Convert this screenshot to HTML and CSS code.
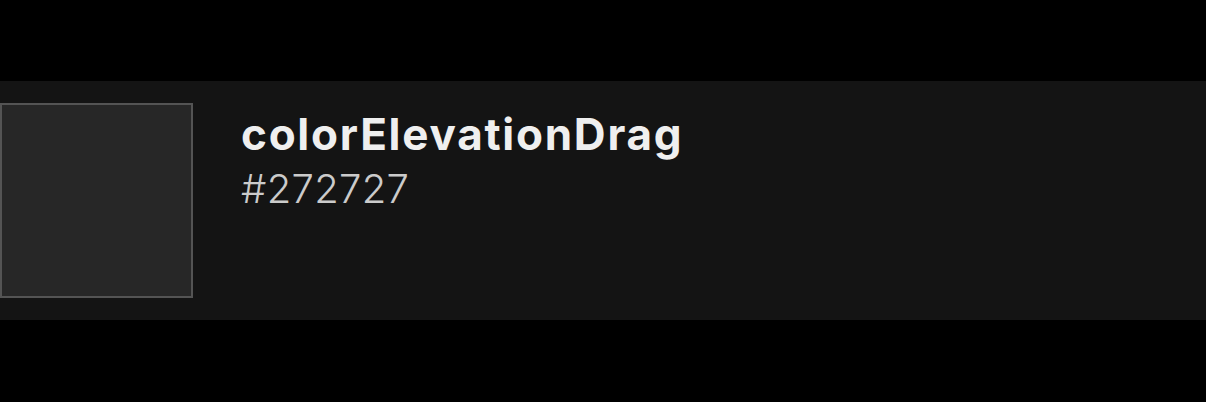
FILE: index.html
```html
<!DOCTYPE html>
<html>
<head>
<meta charset="utf-8">
<link rel="stylesheet" href="styles.css">
</head>
<body>
<div class="page">
  <div class="row">
    <div class="swatch"></div>
    <div class="info">
      <div class="name">colorElevationDrag</div>
      <div class="hex">#272727</div>
    </div>
  </div>
</div>
</body>
</html>
```
FILE: styles.css
```css
html, body { margin: 0; padding: 0; background: #000; }
body { width: 1206px; height: 402px; overflow: hidden; font-family: Inter, "Noto Sans", sans-serif; }
.page { padding-top: 81px; }
.row {
  height: 239px;
  background: #141414;
  display: flex;
  align-items: flex-start;
  padding-top: 22px;
  box-sizing: border-box;
}
.swatch {
  width: 193px; height: 195px;
  box-sizing: border-box;
  background: #272727;
  border: 2px solid #545454;
  flex: none;
}
.info { margin-left: 48px; padding-top: 5px; }
.name { color: #efefef; font-weight: 700; font-size: 44px; line-height: 52px; letter-spacing: 1.75px; }
.hex { color: #cbcbcb; font-weight: 300; font-size: 40px; line-height: 48px; margin-top: 5px; letter-spacing: 0.3px; }
```
